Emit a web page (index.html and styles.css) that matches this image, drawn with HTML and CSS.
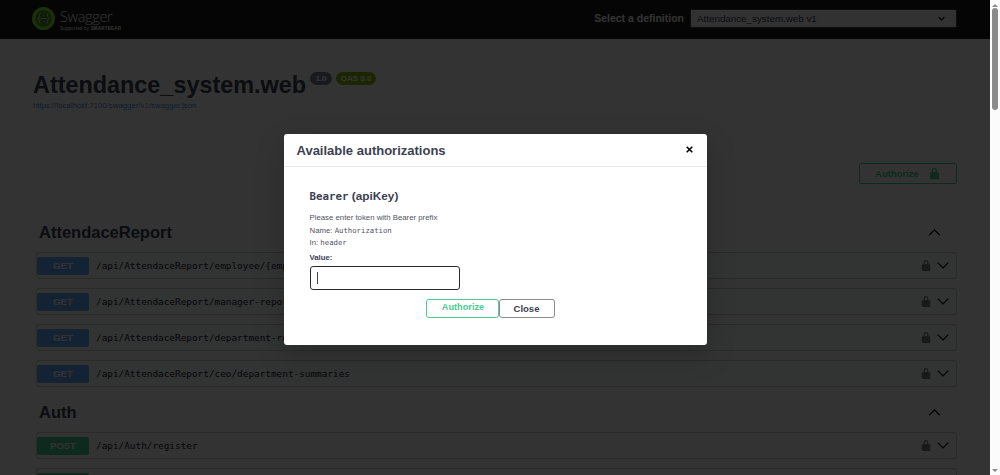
FILE: index.html
```html
<!DOCTYPE html>
<html lang="en">
<head>
<meta charset="utf-8">
<title>Swagger UI</title>
<link rel="stylesheet" href="styles.css">
</head>
<body>
<div class="viewport">
  <div class="app">
    <header class="topbar">
      <div class="brand">
        <svg class="logo" viewBox="0 0 24 24" width="23" height="23" aria-hidden="true">
          <circle cx="12" cy="12" r="12" fill="#85ea2d"/>
          <circle cx="12" cy="12" r="8.500" fill="#4f8f22"/>
          <path d="M9 7c-1.800 0-1.400 2-1.400 3.200 0 1-.6 1.800-1.600 1.800 1 0 1.600.8 1.600 1.800C7.600 15 7.200 17 9 17M15 7c1.800 0 1.400 2 1.400 3.200 0 1 .6 1.800 1.600 1.800-1 0-1.600.8-1.600 1.800 0 1.200.4 3.200-1.400 3.200" fill="none" stroke="#d8e6cc" stroke-width="1"/>
          <path d="M9 12h6" stroke="#d8e6cc" stroke-width="1"/>
        </svg>
        <div class="brand-text">
          <span class="brand-name">Swagger</span>
          <span class="brand-sub">Supported by <b>SMARTBEAR</b></span>
        </div>
      </div>
      <div class="definition">
        <span class="definition-label">Select a definition</span>
        <div class="definition-select">
          <span>Attendance_system.web v1</span>
          <svg viewBox="0 0 10 6" width="7" height="5" aria-hidden="true"><path d="M1 1l4 4 4-4" fill="none" stroke="#000" stroke-width="1.600"/></svg>
        </div>
      </div>
    </header>

    <main class="content">
      <section class="info">
        <div class="title-row">
          <h1 class="title">Attendance_system.web</h1>
          <span class="badge badge-version">1.0</span>
          <span class="badge badge-oas">OAS 3.0</span>
        </div>
        <a class="spec-link">https://localhost:7100/swagger/v1/swagger.json</a>
      </section>

      <div class="auth-wrap">
        <div class="authorize-open">
          <span>Authorize</span>
          <svg viewBox="0 0 20 20" width="13" height="13" aria-hidden="true"><path d="M15.800 8H14V5.600C14 2.700 12.100 1 10 1S6 2.700 6 5.600V8H4.200C3.500 8 3 8.600 3 9.200v8.600c0 .6.5 1.200 1.200 1.200h11.600c.7 0 1.200-.6 1.200-1.200V9.200C17 8.600 16.500 8 15.800 8zM8 8V5.600C8 3.800 8.900 3 10 3s2 .8 2 2.600V8H8z" fill="#49cc90"/></svg>
        </div>
      </div>

      <section class="tag">
        <div class="tag-head">
          <h3>AttendaceReport</h3>
          <svg class="chev" viewBox="0 0 20 20" width="15" height="15" aria-hidden="true"><path d="M3 13.500l7-7 7 7" fill="none" stroke="#000" stroke-width="1.700"/></svg>
        </div>
        <div class="op op-get"><span class="method">GET</span><span class="path">/api/AttendaceReport/employee/{employeeId}</span><svg class="lock" viewBox="0 0 20 20" width="12" height="13" aria-hidden="true"><path d="M15.800 8H14V5.600C14 2.700 12.100 1 10 1S6 2.700 6 5.600V8H4.200C3.500 8 3 8.600 3 9.200v8.600c0 .6.5 1.200 1.200 1.200h11.600c.7 0 1.200-.6 1.200-1.200V9.200C17 8.600 16.500 8 15.800 8zM8 8V5.600C8 3.800 8.900 3 10 3s2 .8 2 2.600V8H8z"/></svg><svg class="chev-small" viewBox="0 0 20 12" width="12" height="7" aria-hidden="true"><path d="M1 1l9 9 9-9" fill="none" stroke="#000" stroke-width="2"/></svg></div>
        <div class="op op-get"><span class="method">GET</span><span class="path">/api/AttendaceReport/manager-report</span><svg class="lock" viewBox="0 0 20 20" width="12" height="13" aria-hidden="true"><path d="M15.800 8H14V5.600C14 2.700 12.100 1 10 1S6 2.700 6 5.600V8H4.200C3.500 8 3 8.600 3 9.200v8.600c0 .6.5 1.200 1.200 1.200h11.600c.7 0 1.200-.6 1.200-1.200V9.200C17 8.600 16.500 8 15.800 8zM8 8V5.600C8 3.800 8.900 3 10 3s2 .8 2 2.600V8H8z"/></svg><svg class="chev-small" viewBox="0 0 20 12" width="12" height="7" aria-hidden="true"><path d="M1 1l9 9 9-9" fill="none" stroke="#000" stroke-width="2"/></svg></div>
        <div class="op op-get"><span class="method">GET</span><span class="path">/api/AttendaceReport/department-report</span><svg class="lock" viewBox="0 0 20 20" width="12" height="13" aria-hidden="true"><path d="M15.800 8H14V5.600C14 2.700 12.100 1 10 1S6 2.700 6 5.600V8H4.200C3.500 8 3 8.600 3 9.200v8.600c0 .6.5 1.200 1.200 1.200h11.600c.7 0 1.200-.6 1.200-1.200V9.200C17 8.600 16.500 8 15.800 8zM8 8V5.600C8 3.800 8.900 3 10 3s2 .8 2 2.600V8H8z"/></svg><svg class="chev-small" viewBox="0 0 20 12" width="12" height="7" aria-hidden="true"><path d="M1 1l9 9 9-9" fill="none" stroke="#000" stroke-width="2"/></svg></div>
        <div class="op op-get"><span class="method">GET</span><span class="path">/api/AttendaceReport/ceo/department-summaries</span><svg class="lock" viewBox="0 0 20 20" width="12" height="13" aria-hidden="true"><path d="M15.800 8H14V5.600C14 2.700 12.100 1 10 1S6 2.700 6 5.600V8H4.200C3.500 8 3 8.600 3 9.200v8.600c0 .6.5 1.200 1.200 1.200h11.600c.7 0 1.200-.6 1.200-1.200V9.200C17 8.600 16.500 8 15.800 8zM8 8V5.600C8 3.800 8.900 3 10 3s2 .8 2 2.600V8H8z"/></svg><svg class="chev-small" viewBox="0 0 20 12" width="12" height="7" aria-hidden="true"><path d="M1 1l9 9 9-9" fill="none" stroke="#000" stroke-width="2"/></svg></div>
      </section>

      <section class="tag">
        <div class="tag-head">
          <h3>Auth</h3>
          <svg class="chev" viewBox="0 0 20 20" width="15" height="15" aria-hidden="true"><path d="M3 13.500l7-7 7 7" fill="none" stroke="#000" stroke-width="1.700"/></svg>
        </div>
        <div class="op op-post"><span class="method">POST</span><span class="path">/api/Auth/register</span><svg class="lock" viewBox="0 0 20 20" width="12" height="13" aria-hidden="true"><path d="M15.800 8H14V5.600C14 2.700 12.100 1 10 1S6 2.700 6 5.600V8H4.200C3.500 8 3 8.600 3 9.200v8.600c0 .6.5 1.200 1.200 1.200h11.600c.7 0 1.200-.6 1.200-1.200V9.200C17 8.600 16.500 8 15.800 8zM8 8V5.600C8 3.800 8.900 3 10 3s2 .8 2 2.600V8H8z"/></svg><svg class="chev-small" viewBox="0 0 20 12" width="12" height="7" aria-hidden="true"><path d="M1 1l9 9 9-9" fill="none" stroke="#000" stroke-width="2"/></svg></div>
        <div class="op op-post"><span class="method"></span></div>
      </section>
    </main>

    <div class="backdrop">
      <div class="modal">
        <div class="modal-head">
          <h3>Available authorizations</h3>
          <svg class="modal-close" viewBox="0 0 10 10" width="7" height="7" aria-hidden="true"><path d="M1 1l8 8M9 1l-8 8" stroke="#000" stroke-width="2.200"/></svg>
        </div>
        <div class="modal-body">
          <h4 class="scheme"><code>Bearer</code> (apiKey)</h4>
          <p class="line">Please enter token with Bearer prefix</p>
          <p class="line">Name: <code>Authorization</code></p>
          <p class="line">In: <code>header</code></p>
          <label class="value-label">Value:</label>
          <div class="value-input"><span class="caret"></span></div>
          <div class="actions">
            <span class="btn btn-authorize">Authorize</span>
            <span class="btn btn-close">Close</span>
          </div>
        </div>
      </div>
    </div>
  </div>

  <div class="scrollbar">
    <span class="arrow-up"></span>
    <span class="thumb"></span>
    <span class="arrow-down"></span>
  </div>
</div>
</body>
</html>
```
FILE: styles.css
```css
* { box-sizing: border-box; }
html, body { margin: 0; height: 100%; overflow: hidden; }
body { font-family: "Liberation Sans", Arial, sans-serif; background: #fff; color: #3b4151; }

.viewport { display: flex; height: 475px; }
.app { position: relative; flex: 1; min-width: 0; height: 475px; overflow: hidden; background: #fff; }

.topbar { height: 39px; background: #1b1b1b; display: flex; align-items: center; justify-content: space-between; padding: 0 33px 3px 32px; }
.brand { display: flex; align-items: center; gap: 5px; }
.logo { display: block; }
.brand-text { display: flex; flex-direction: column; color: #fff; white-space: nowrap; padding-top: 3px; }
.brand-name { font-family: "Open Sans", sans-serif; font-size: 14.600px; line-height: 17px; letter-spacing: -.4px; font-weight: 300; }
.brand-sub { font-size: 4.500px; line-height: 6px; letter-spacing: .2px; margin-top: 1px; }
.definition { display: flex; align-items: center; gap: 6px; }
.definition-label { color: #fff; font-size: 10.500px; font-weight: 700; }
.definition-select { width: 267px; height: 19px; background: #f7f7f7; border: 1px solid #41444e; border-radius: 2px; display: flex; align-items: center; justify-content: space-between; padding: 0 11px 0 6px; font-size: 9.800px; color: #3b4151; }

.content { padding: 0 33px 0 36px; }
.info { padding: 33px 0 0; margin-left: -3px; }
.title-row { display: flex; align-items: flex-start; height: 25px; }
.title { margin: 0; font-size: 23.400px; line-height: 26px; font-weight: 700; color: #3b4151; }
.badge { width: 22px; height: 13px; line-height: 13px; border-radius: 7px; color: #fff; font-size: 8px; font-weight: 700; text-align: center; margin-left: 4px; }
.badge-version { background: #7d8492; }
.badge-oas { background: #89bf04; width: 40px; }
.spec-link { display: block; margin-top: 4px; font-size: 7.800px; line-height: 10px; color: #4990e2; }

.auth-wrap { display: flex; justify-content: flex-end; margin-top: 52px; }
.authorize-open { width: 98px; height: 21px; border: 1px solid #49cc90; border-radius: 2px; display: flex; align-items: center; justify-content: center; gap: 9px; color: #49cc90; font-size: 9.500px; font-weight: 700; }

.tag-head { display: flex; align-items: center; justify-content: space-between; height: 25px; padding: 0 15px 0 3px; margin-bottom: 7px; }
.tag-head h3 { margin: 0; font-size: 16.500px; font-weight: 700; color: #3b4151; }
.tag { margin-bottom: 13px; }
.auth-wrap + .tag { margin-top: 36px; }
.chev { display: block; }

.op { height: 27px; margin-bottom: 9px; border: 1px solid #cfcfcf; border-radius: 3px; display: flex; align-items: center; padding: 0 7px 0 0; }
.op-get { background: rgba(97,175,254,.04); }
.op-post { background: rgba(73,204,144,.04); }
.method { width: 52px; height: 18px; line-height: 18px; border-radius: 2px; text-align: center; color: #fff; font-size: 9.500px; font-weight: 700; flex: none; }
.op-get .method { background: #61affe; }
.op-post .method { background: #49cc90; }
.path { flex: 1; margin-left: 7px; font-family: "DejaVu Sans Mono", monospace; font-size: 9.400px; color: #1f2430; white-space: nowrap; overflow: hidden; }
.lock { fill: #000; opacity: .5; margin-right: 5px; }
.chev-small { display: block; }

.backdrop { position: absolute; inset: 0; background: rgba(0,0,0,.8); display: flex; justify-content: center; align-items: flex-start; padding-top: 134px; }
.modal { width: 423px; height: 211px; background: #fff; border-radius: 3px; box-shadow: 0 10px 30px rgba(0,0,0,.2); }
.modal-head { height: 33px; padding: 0 14px 0 13px; display: flex; align-items: center; justify-content: space-between; border-bottom: 1px solid #ebebeb; }
.modal-head h3 { margin: 0; font-size: 13px; font-weight: 700; color: #3b4151; }
.modal-close { margin: 0 0 2px 0; }
.modal-body { padding: 22px 26px 0; }
.scheme { margin: 0 0 8px; font-size: 11.800px; line-height: 14px; font-weight: 700; color: #3b4151; }
.scheme code { font-family: "DejaVu Sans Mono", monospace; font-size: 10.800px; }
.line { margin: 0; font-size: 7.800px; line-height: 12.500px; color: #50545f; }
.line code { font-family: "DejaVu Sans Mono", monospace; font-size: 7.300px; }
.value-label { display: block; margin-top: 2px; font-size: 7.800px; line-height: 12px; font-weight: 700; color: #3b4151; }
.value-input { width: 150px; height: 24px; margin-top: 2px; border: 1.500px solid #2a2a2a; border-radius: 3px; display: flex; align-items: center; padding-left: 6px; }
.caret { width: 1px; height: 12px; background: #444; }
.actions { display: flex; margin: 9px 0 0 116px; }
.btn { height: 19px; display: flex; align-items: center; justify-content: center; border-radius: 3px; font-size: 9.500px; font-weight: 700; }
.btn-authorize { width: 73px; border: 1px solid #49cc90; color: #49cc90; padding: 0 0 2px 2px; font-size: 9.200px; }
.btn-close { width: 56px; border: 1px solid #8c8c8c; color: #3b4151; }

.scrollbar { flex: none; width: 10px; height: 475px; background: #fbfbfb; display: flex; flex-direction: column; align-items: center; }
.arrow-up { width: 0; height: 0; margin-top: 4px; border: 3px solid transparent; border-top: 0; border-bottom: 3px solid #8a8a8a; }
.thumb { width: 6px; height: 102px; margin-top: 1px; background: #8a8a8a; border-radius: 3px; }
.arrow-down { width: 0; height: 0; margin-top: auto; margin-bottom: 3px; border: 3px solid transparent; border-bottom: 0; border-top: 3px solid #8a8a8a; }
```
